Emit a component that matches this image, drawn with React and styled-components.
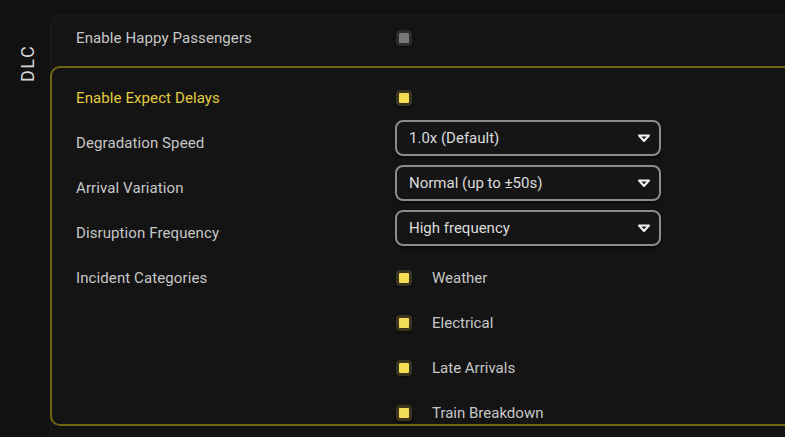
import React from 'react';
import styled, { createGlobalStyle } from 'styled-components';

const GlobalStyle = createGlobalStyle`
  html, body {
    margin: 0;
    padding: 0;
    background: #111111;
    overflow: hidden;
  }
  body {
    font-family: Roboto, "Noto Sans", sans-serif;
  }
`;

const Page = styled.div`
  display: flex;
  width: 785px;
  height: 437px;
  background: #111111;
  overflow: hidden;
`;

const Sidebar = styled.div`
  width: 50px;
  flex-shrink: 0;
  display: flex;
  justify-content: center;
  padding-top: 44px;
  box-sizing: border-box;
`;

const SideLabel = styled.div`
  writing-mode: vertical-rl;
  transform: rotate(180deg);
  font-size: 18px;
  letter-spacing: 1.5px;
  color: #d6d6d6;
  height: 38px;
  line-height: 18px;
  margin-left: 6px;
`;

const Panel = styled.div`
  flex: 1;
  margin-top: 14px;
  background: #141414;
  border-top: 1px solid #1b1b1b;
  border-left: 1px solid #1b1b1b;
  border-top-left-radius: 10px;
  display: flex;
  flex-direction: column;
  box-sizing: border-box;
`;

const Row = styled.div`
  display: flex;
  align-items: ${({ $align }) => $align || 'center'};
  height: ${({ $height }) => $height || 45}px;
  padding-top: ${({ $padTop }) => $padTop || 0}px;
  box-sizing: border-box;
`;

const Label = styled.div`
  width: 320px;
  flex-shrink: 0;
  font-size: 15px;
  line-height: 16px;
  color: ${({ $active }) => ($active ? '#e3cb3c' : '#c7c7c7')};
  letter-spacing: 0.1px;
`;

const TopRow = styled(Row)`
  padding-left: 25px;
  margin-top: -1px;
`;

const Group = styled.div`
  margin-top: 4px;
  margin-left: -1px;
  margin-right: -20px;
  border: 2px solid #6e6614;
  border-radius: 10px;
  padding: 7px 0 1px 24px;
  box-sizing: border-box;
  display: flex;
  flex-direction: column;
`;

const Checkbox = styled.span`
  display: inline-block;
  width: 10px;
  height: 10px;
  border: 3px solid ${({ $checked }) => ($checked ? '#3a3521' : '#2c2c2c')};
  border-radius: 4px;
  background: ${({ $checked }) => ($checked ? '#f3de56' : '#777777')};
  box-shadow: 0 1px 2px rgba(0, 0, 0, 0.6);
  flex-shrink: 0;
`;

const Select = styled.div`
  align-self: flex-start;
  width: 266px;
  height: 36px;
  margin-left: -1px;
  box-sizing: border-box;
  border: 2px solid #8c8c8c;
  border-radius: 8px;
  background: #151515;
  display: flex;
  align-items: center;
  justify-content: space-between;
  padding: 0 8px 0 12px;
  font-size: 15px;
  color: #dcdcdc;
  box-shadow: 0 2px 3px rgba(0, 0, 0, 0.5);
`;

const Caret = () => (
  <svg width="14" height="9" viewBox="0 0 14 9">
    <polygon points="2,1.5 12,1.5 7,7" fill="#222" stroke="#f0f0f0" strokeWidth="2" strokeLinejoin="round" />
  </svg>
);

const OptionList = styled.div`
  display: flex;
  flex-direction: column;
  gap: 29px;
`;

const Option = styled.div`
  display: flex;
  align-items: center;
  height: 16px;
  gap: 20px;
  font-size: 15px;
  color: #c7c7c7;
`;

const selects = [
  { label: 'Degradation Speed', value: '1.0x (Default)' },
  { label: 'Arrival Variation', value: 'Normal (up to ±50s)' },
  { label: 'Disruption Frequency', value: 'High frequency' },
];

const categories = ['Weather', 'Electrical', 'Late Arrivals', 'Train Breakdown'];

export default function App() {
  return (
    <>
      <GlobalStyle />
      <Page>
        <Sidebar>
          <SideLabel>DLC</SideLabel>
        </Sidebar>
        <Panel>
          <TopRow $height={48}>
            <Label>Enable Happy Passengers</Label>
            <Checkbox />
          </TopRow>
          <Group>
            <Row>
              <Label $active>Enable Expect Delays</Label>
              <Checkbox $checked />
            </Row>
            {selects.map((s) => (
              <Row key={s.label}>
                <Label>{s.label}</Label>
                <Select>
                  <span>{s.value}</span>
                  <Caret />
                </Select>
              </Row>
            ))}
            <Row $align="flex-start" $height={168} $padTop={15}>
              <Label>Incident Categories</Label>
              <OptionList>
                {categories.map((c) => (
                  <Option key={c}>
                    <Checkbox $checked />
                    <span>{c}</span>
                  </Option>
                ))}
              </OptionList>
            </Row>
          </Group>
        </Panel>
      </Page>
    </>
  );
}
